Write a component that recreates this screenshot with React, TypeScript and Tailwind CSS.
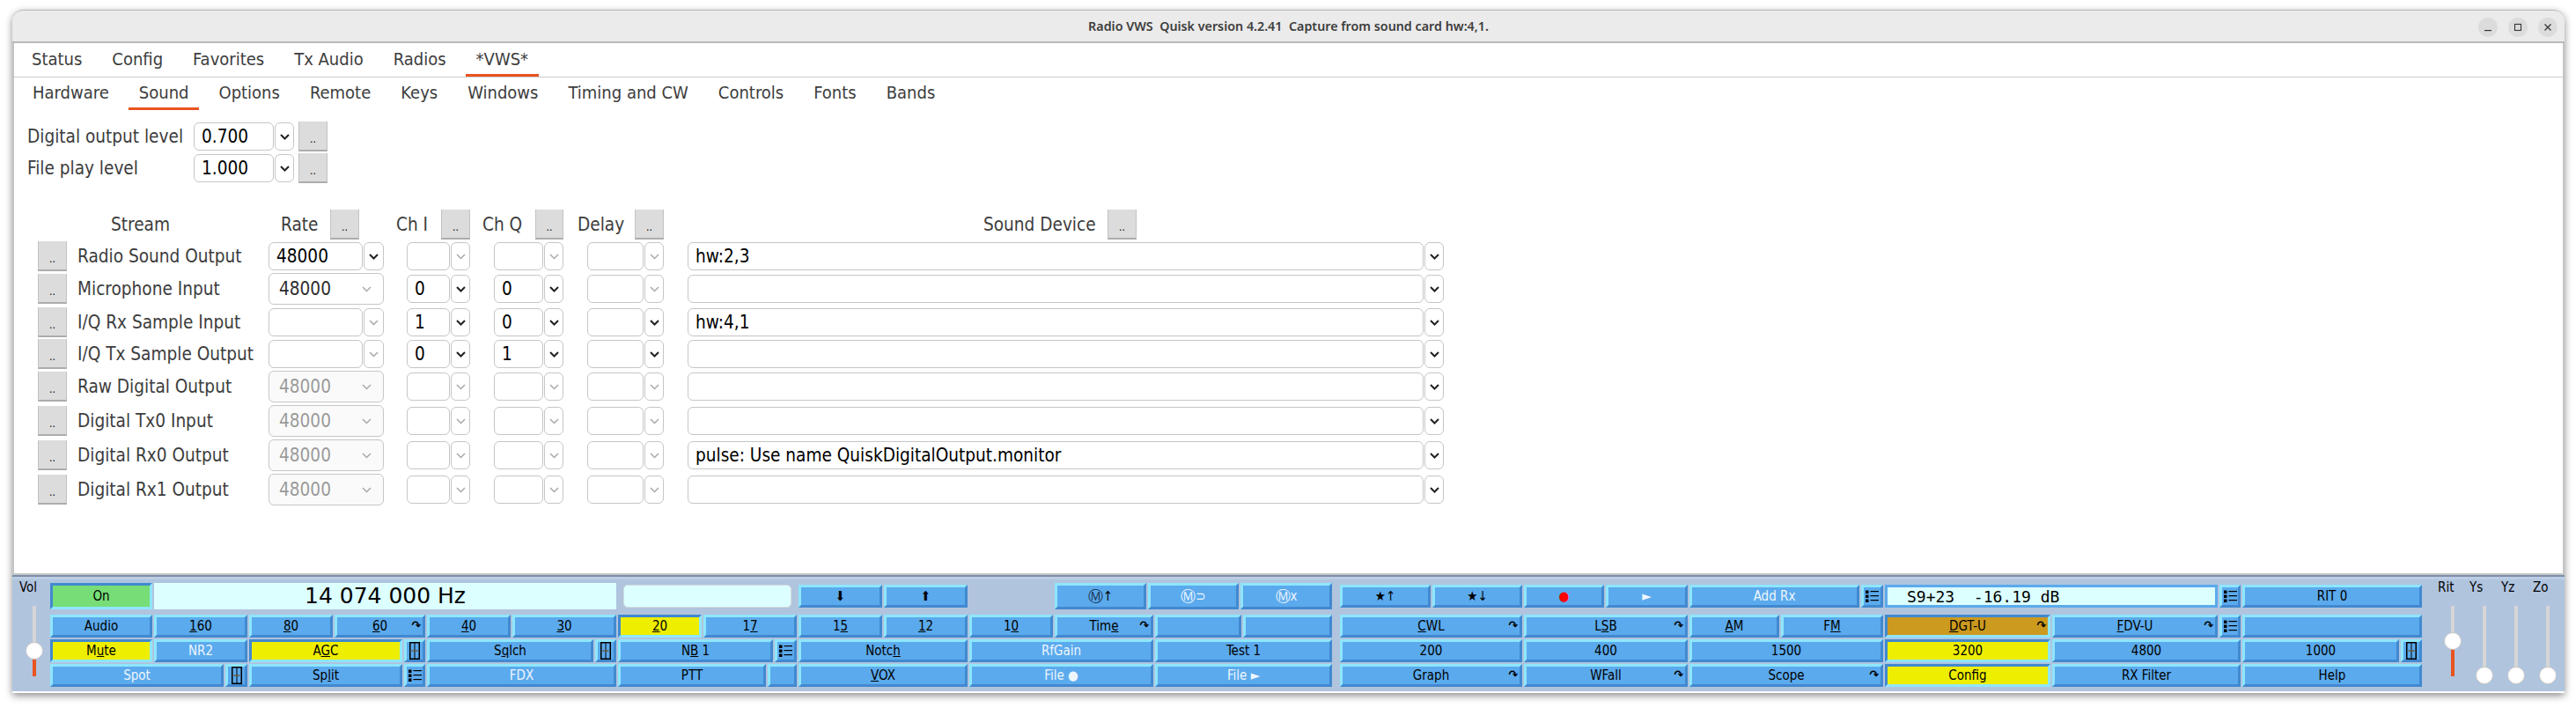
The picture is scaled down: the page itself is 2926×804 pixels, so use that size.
import React from 'react';

const cn = (...parts: (string | false | undefined)[]) => parts.filter(Boolean).join(' ');

const Chevron = ({ muted }: { muted?: boolean }) => (
  <svg width="11" height="7" viewBox="0 0 11 7" fill="none" stroke={muted ? '#a9a9a9' : '#222222'} strokeWidth={muted ? 1.5 : 2}>
    <polyline points="1,1 5.5,5.5 10,1" />
  </svg>
);

const DotsButton = ({ className }: { className?: string }) => (
  <button className={cn('h-[34px] shrink-0 border-x border-b-2 border-x-[#c2c2c2] border-b-[#acacac] bg-[#dcdcdc] pt-[8px] text-center text-[12px] leading-none text-black', className ?? 'w-[33px]')}>
    ..
  </button>
);

// separate text box and drop button, like a wx ComboBox
const Combo = ({ value, input, muted, drop = 'w-[22px]' }: { value?: string; input: string; muted?: boolean; drop?: string }) => (
  <div className="flex h-[32px] shrink-0 gap-[1px]">
    <div className={cn('flex items-center rounded-md border border-[#c6c6c6] pl-[8px] text-black', input)}>{value}</div>
    <div className={cn('flex items-center justify-center rounded-md border border-[#c6c6c6]', drop)}>
      <Chevron muted={muted} />
    </div>
  </div>
);

// a Choice control, one box with the arrow inside
const Choice = ({ value, disabled }: { value: string; disabled?: boolean }) => (
  <div className={cn('flex h-[36px] w-[131px] shrink-0 items-center justify-between rounded-md border border-[#c6c6c6] pl-[11px] pr-[13px] pt-[1px]', disabled ? 'bg-[#fafafa] text-[#9a9a9a]' : 'text-[#2d2d2d]')}>
    {value}
    <Chevron muted />
  </div>
);

type StreamRow = {
  label: string;
  mt: string;
  rate?: string;
  rateChoice?: boolean;
  rateDisabled?: boolean;
  chI?: string;
  chQ?: string;
  delayLive?: boolean;
  device?: string;
};

const streams: StreamRow[] = [
  { label: 'Radio Sound Output', mt: 'mt-[2px]', rate: '48000', device: 'hw:2,3' },
  { label: 'Microphone Input', mt: 'mt-[2px]', rate: '48000', rateChoice: true, chI: '0', chQ: '0' },
  { label: 'I/Q Rx Sample Input', mt: 'mt-[3px]', chI: '1', chQ: '0', delayLive: true, device: 'hw:4,1' },
  { label: 'I/Q Tx Sample Output', mt: 'mt-[2px]', chI: '0', chQ: '1', delayLive: true },
  { label: 'Raw Digital Output', mt: 'mt-[2px]', rate: '48000', rateChoice: true, rateDisabled: true },
  { label: 'Digital Tx0 Input', mt: 'mt-[3px]', rate: '48000', rateChoice: true, rateDisabled: true },
  { label: 'Digital Rx0 Output', mt: 'mt-[3px]', rate: '48000', rateChoice: true, rateDisabled: true, device: 'pulse: Use name QuiskDigitalOutput.monitor' },
  { label: 'Digital Rx1 Output', mt: 'mt-[3px]', rate: '48000', rateChoice: true, rateDisabled: true },
];

const StreamLine = ({ row }: { row: StreamRow }) => (
  <div className={cn('ml-[27px] flex items-center', row.mt, row.rateChoice ? 'h-[36px]' : 'h-[34px]')}>
    <DotsButton />
    <div className="ml-[12px] w-[217px] shrink-0 text-[#3d3d3d]">{row.label}</div>
    {row.rateChoice ? (
      <Choice value={row.rate ?? ''} disabled={row.rateDisabled} />
    ) : (
      <Combo value={row.rate} input="w-[107px]" drop="w-[23px]" muted={!row.rate} />
    )}
    <div className="ml-[26px]">
      <Combo value={row.chI} input="w-[49px]" muted={!row.chI} />
    </div>
    <div className="ml-[27px]">
      <Combo value={row.chQ} input="w-[56px]" muted={!row.chQ} />
    </div>
    <div className="ml-[27px]">
      <Combo input="w-[64px]" muted={!row.delayLive} />
    </div>
    <div className="ml-[27px]">
      <Combo value={row.device} input="w-[836px]" />
    </div>
  </div>
);

const ListIcon = () => (
  <svg width="15" height="15" viewBox="0 0 15 15">
    <rect x="0" y="0.5" width="3.5" height="3.5" fill="#000" />
    <rect x="0" y="5.5" width="3.5" height="3.5" fill="#000" />
    <rect x="0" y="10.5" width="3.5" height="3.5" fill="#000" />
    <rect x="5.5" y="1" width="9.5" height="1.2" fill="#000" />
    <rect x="5.5" y="6" width="9.5" height="1.2" fill="#000" />
    <rect x="5.5" y="11" width="9.5" height="1.2" fill="#000" />
  </svg>
);

const SliderIcon = () => (
  <svg width="12" height="20" viewBox="0 0 12 20" fill="none" stroke="#000">
    <rect x="0.75" y="0.75" width="10.5" height="18.5" strokeWidth="1.5" />
    <line x1="6" y1="1" x2="6" y2="19" strokeWidth="1" />
    <line x1="2.5" y1="10" x2="9.5" y2="10" strokeWidth="1.5" stroke="#6b5a40" />
  </svg>
);

type BtnProps = {
  className: string;
  children?: React.ReactNode;
  pressed?: boolean;
  fill?: string;
  light?: boolean;
  turn?: boolean;
};

// Quisk's bevelled button, 3px light top/left and dark bottom/right, swapped when pressed
const Btn = ({ className, children, pressed, fill, light, turn }: BtnProps) => (
  <button
    className={cn(
      'relative flex h-[26px] shrink-0 items-center justify-center border-[3px] text-[15px] leading-none',
      pressed
        ? 'border-t-[#4189d0] border-l-[#4189d0] border-b-[#8ee6fd] border-r-[#8ee6fd]'
        : 'border-t-[#8ee6fd] border-l-[#8ee6fd] border-b-[#4189d0] border-r-[#4189d0]',
      fill ?? 'bg-[#5baaed]',
      light ? 'text-[#eef6fd]' : 'text-black',
      className
    )}
  >
    {children}
    {turn && <span className="absolute right-[2px] top-[2px] text-[14px] font-bold leading-[14px] text-black">↷</span>}
  </button>
);

const YELLOW = 'bg-[#eeee00]';

const Rows = () => (
  <div className="w-[2694px] shrink-0 pt-[4px]">
    <div className="flex h-[30px] items-center gap-[2px]">
      <Btn className="h-[30px] w-[116px]" pressed fill="bg-[#77dd77]">On</Btn>
      <div className="flex h-[30px] w-[525px] shrink-0 items-center justify-center bg-[#dcffff] font-['DejaVu_Sans',sans-serif] text-[25px] text-black">14 074 000 Hz</div>
      <div className="ml-[6px] h-[26px] w-[191px] shrink-0 rounded-[5px] border border-[#d4dcdc] bg-[#dcffff]" />
      <Btn className="ml-[6px] w-[95px]">⬇</Btn>
      <Btn className="w-[95px]">⬆</Btn>
      <Btn className="ml-[97px] h-[30px] w-[104px]"><span className="text-[17px] text-[#16314f]">Ⓜ</span>↑</Btn>
      <Btn className="h-[30px] w-[103px]" light><span className="text-[17px]">Ⓜ</span> ⊃</Btn>
      <Btn className="h-[30px] w-[104px]" light><span className="text-[17px]">Ⓜ</span>x</Btn>
      <Btn className="ml-[7px] w-[103px]">★↑</Btn>
      <Btn className="w-[102px]">★↓</Btn>
      <Btn className="w-[91px]"><span className="text-[#ff0000]">●</span></Btn>
      <Btn className="w-[93px]" light>►</Btn>
      <Btn className="w-[193px]" light>Add Rx</Btn>
      <Btn className="w-[25px]"><ListIcon /></Btn>
      <div className="flex h-[26px] w-[378px] shrink-0 items-center border-[3px] border-[#5baaed] bg-[#dcffff] pl-[22px] font-['DejaVu_Sans_Mono',monospace] text-[18px] whitespace-pre text-black">S9+23  -16.19 dB</div>
      <Btn className="w-[24px]"><ListIcon /></Btn>
      <Btn className="w-[204px]">RIT 0</Btn>
    </div>

    <div className="mt-[6px] flex gap-[2px]">
      <Btn className="w-[116px]">Audio</Btn>
      <Btn className="w-[106px]"><span><u>1</u>60</span></Btn>
      <Btn className="w-[95px]"><span><u>8</u>0</span></Btn>
      <Btn className="w-[103px]" turn><span><u>6</u>0</span></Btn>
      <Btn className="w-[95px]"><span><u>4</u>0</span></Btn>
      <Btn className="w-[118px]"><span><u>3</u>0</span></Btn>
      <Btn className="w-[95px]" pressed fill={YELLOW}><span><u>2</u>0</span></Btn>
      <Btn className="w-[106px]"><span>1<u>7</u></span></Btn>
      <Btn className="w-[95px]"><span>1<u>5</u></span></Btn>
      <Btn className="w-[95px]"><span><u>1</u>2</span></Btn>
      <Btn className="w-[95px]"><span>1<u>0</u></span></Btn>
      <Btn className="w-[112px]" turn><span>Tim<u>e</u></span></Btn>
      <Btn className="w-[98px]" />
      <Btn className="w-[101px]" />
      <Btn className="ml-[7px] w-[207px]" turn><span><u>C</u>WL</span></Btn>
      <Btn className="w-[186px]" turn><span>L<u>S</u>B</span></Btn>
      <Btn className="w-[102px]"><span><u>A</u>M</span></Btn>
      <Btn className="w-[116px]"><span>F<u>M</u></span></Btn>
      <Btn className="w-[188px]" pressed fill="bg-[#cc9a1e]" turn><span><u>D</u>GT-U</span></Btn>
      <Btn className="w-[188px]" turn><span><u>F</u>DV-U</span></Btn>
      <Btn className="w-[24px]"><ListIcon /></Btn>
      <Btn className="w-[204px]" />
    </div>

    <div className="mt-[2px] flex gap-[2px]">
      <Btn className="w-[116px]" pressed fill={YELLOW}><span>M<u>u</u>te</span></Btn>
      <Btn className="w-[106px]" light>NR2</Btn>
      <Btn className="w-[174px]" pressed fill={YELLOW}><span>A<u>G</u>C</span></Btn>
      <Btn className="w-[24px]"><SliderIcon /></Btn>
      <Btn className="w-[189px]"><span>S<u>q</u>lch</span></Btn>
      <Btn className="w-[24px]"><SliderIcon /></Btn>
      <Btn className="w-[176px]"><span>N<u>B</u> 1</span></Btn>
      <Btn className="w-[25px]"><ListIcon /></Btn>
      <Btn className="w-[192px]"><span>Notc<u>h</u></span></Btn>
      <Btn className="w-[209px]" light>RfGain</Btn>
      <Btn className="w-[201px]">Test 1</Btn>
      <Btn className="ml-[7px] w-[207px]">200</Btn>
      <Btn className="w-[186px]">400</Btn>
      <Btn className="w-[220px]">1500</Btn>
      <Btn className="w-[188px]" pressed fill={YELLOW}>3200</Btn>
      <Btn className="w-[214px]">4800</Btn>
      <Btn className="w-[178px]">1000</Btn>
      <Btn className="w-[24px]"><SliderIcon /></Btn>
    </div>

    <div className="mt-[2px] flex gap-[2px]">
      <Btn className="w-[197px]" light>Spot</Btn>
      <Btn className="w-[25px]"><SliderIcon /></Btn>
      <Btn className="w-[174px]"><span>Sp<u>l</u>it</span></Btn>
      <Btn className="w-[24px]"><ListIcon /></Btn>
      <Btn className="w-[215px]" light>FDX</Btn>
      <Btn className="w-[168px]">PTT</Btn>
      <Btn className="w-[33px]" />
      <Btn className="w-[192px]"><span><u>V</u>OX</span></Btn>
      <Btn className="w-[209px]" light>File ●</Btn>
      <Btn className="w-[201px]" light>File ►</Btn>
      <Btn className="ml-[7px] w-[207px]" turn>Graph</Btn>
      <Btn className="w-[186px]" turn>WFall</Btn>
      <Btn className="w-[220px]" turn>Scope</Btn>
      <Btn className="w-[188px]" pressed fill={YELLOW}>Config</Btn>
      <Btn className="w-[214px]">RX Filter</Btn>
      <Btn className="w-[204px]">Help</Btn>
    </div>
  </div>
);

const Fader = ({ label, knob, red }: { label: string; knob: string; red?: string }) => (
  <div className="w-[36px] pt-[1px]">
    <div className="h-[16px] text-[15px] leading-[16px] text-black">{label}</div>
    <div className="relative mt-[13px] h-[80px] w-[34px]">
      <div className="absolute left-[15px] top-0 h-[80px] w-[4px] bg-[#d6d6d6]" />
      {red && <div className={cn('absolute bottom-0 left-[15px] w-[4px] bg-[#e95420]', red)} />}
      <div className={cn('absolute left-[7px] h-[20px] w-[20px] rounded-full border border-[#c8c8c8] bg-white', knob)} />
    </div>
  </div>
);

const mainTabs = ['Status', 'Config', 'Favorites', 'Tx Audio', 'Radios', '*VWS*'];
const subTabs = ['Hardware', 'Sound', 'Options', 'Remote', 'Keys', 'Windows', 'Timing and CW', 'Controls', 'Fonts', 'Bands'];

const TabBar = ({ tabs, active, className }: { tabs: string[]; active: string; className: string }) => (
  <div className={cn('flex gap-[10px]', className)}>
    {tabs.map((t) => (
      <div key={t} className={cn('flex items-center border-b-[3px] px-[12px]', t === active ? 'border-[#e95420]' : 'border-transparent')}>
        {t}
      </div>
    ))}
  </div>
);

export default function App() {
  return (
    <div className="h-[804px] w-[2926px] overflow-hidden bg-white pl-[14px] pt-[11px] font-['DejaVu_Sans_Condensed','DejaVu_Sans',sans-serif] text-[20px]">
      <div className="h-[776px] w-[2899px] rounded-t-[12px] shadow-[0_3px_8px_rgba(0,0,0,0.45)]">
        {/* title bar */}
        <div className="relative flex h-[38px] items-center justify-center rounded-t-[12px] border-b-2 border-t border-[#b9b9b9] bg-[#ebebeb] font-['Noto_Sans',sans-serif] text-[14.3px] font-semibold whitespace-pre text-[#3d3d3d]">
          Radio VWS  Quisk version 4.2.41  Capture from sound card hw:4,1.
          <div className="absolute right-[8px] top-[8px] flex gap-[12px]">
            <div className="flex h-[22px] w-[22px] items-center justify-center rounded-full bg-[#dcdcdc]">
              <svg width="10" height="10" viewBox="0 0 10 10"><rect x="1" y="8" width="8" height="1.2" fill="#333" /></svg>
            </div>
            <div className="flex h-[22px] w-[22px] items-center justify-center rounded-full bg-[#dcdcdc]">
              <svg width="10" height="10" viewBox="0 0 10 10" fill="none" stroke="#333" strokeWidth="1.1"><rect x="1.5" y="1.5" width="7" height="7" /></svg>
            </div>
            <div className="flex h-[22px] w-[22px] items-center justify-center rounded-full bg-[#dcdcdc]">
              <svg width="10" height="10" viewBox="0 0 10 10" fill="none" stroke="#333" strokeWidth="1.2"><path d="M1.5 1.5 L8.5 8.5 M8.5 1.5 L1.5 8.5" /></svg>
            </div>
          </div>
        </div>

        {/* config area */}
        <div className="h-[604px] border-x-2 border-b-2 border-[#c4c4c4] bg-white text-[#3d3d3d]">
          <TabBar tabs={mainTabs} active="*VWS*" className="h-[38px] pl-[8px]" />
          <div className="h-px bg-[#cccccc]" />
          <TabBar tabs={subTabs} active="Sound" className="h-[37px] pl-[9px]" />

          <div className="text-[20.6px]">
            <div className="ml-[15px] mt-[13px] flex h-[34px] items-center">
              <div className="w-[189px] shrink-0">Digital output level</div>
              <Combo value="0.700" input="w-[91px]" />
              <DotsButton className="ml-[5px] w-[33px]" />
            </div>
            <div className="ml-[15px] mt-[2px] flex h-[34px] items-center">
              <div className="w-[189px] shrink-0">File play level</div>
              <Combo value="1.000" input="w-[91px]" />
              <DotsButton className="ml-[5px] w-[33px]" />
            </div>

            <div className="ml-[110px] mt-[30px] flex h-[34px] items-center">
              <div className="w-[193px] shrink-0">Stream</div>
              <div className="w-[56px] shrink-0">Rate</div>
              <DotsButton />
              <div className="ml-[42px] w-[51px] shrink-0">Ch I</div>
              <DotsButton />
              <div className="ml-[14px] w-[60px] shrink-0">Ch Q</div>
              <DotsButton className="w-[32px]" />
              <div className="ml-[16px] w-[65px] shrink-0">Delay</div>
              <DotsButton />
              <div className="ml-[363px] w-[141px] shrink-0">Sound Device</div>
              <DotsButton />
            </div>

            {streams.map((row) => (
              <StreamLine key={row.label} row={row} />
            ))}
          </div>
        </div>

        <div className="h-[2px] bg-[#7e8ea8]" />
        <div className="h-[3px] bg-[#bccde4]" />

        {/* Quisk control panel */}
        <div className="flex h-[127px] bg-[#b0c4de] pl-[8px]">
          <Fader label="Vol" knob="top-[41px]" red="h-[29px]" />
          <Rows />
          <div className="ml-[18px] flex">
            <Fader label="Rit" knob="top-[30px]" red="h-[40px]" />
            <Fader label="Ys" knob="top-[69px]" />
            <Fader label="Yz" knob="top-[69px]" />
            <Fader label="Zo" knob="top-[69px]" />
          </div>
        </div>
      </div>
    </div>
  );
}
